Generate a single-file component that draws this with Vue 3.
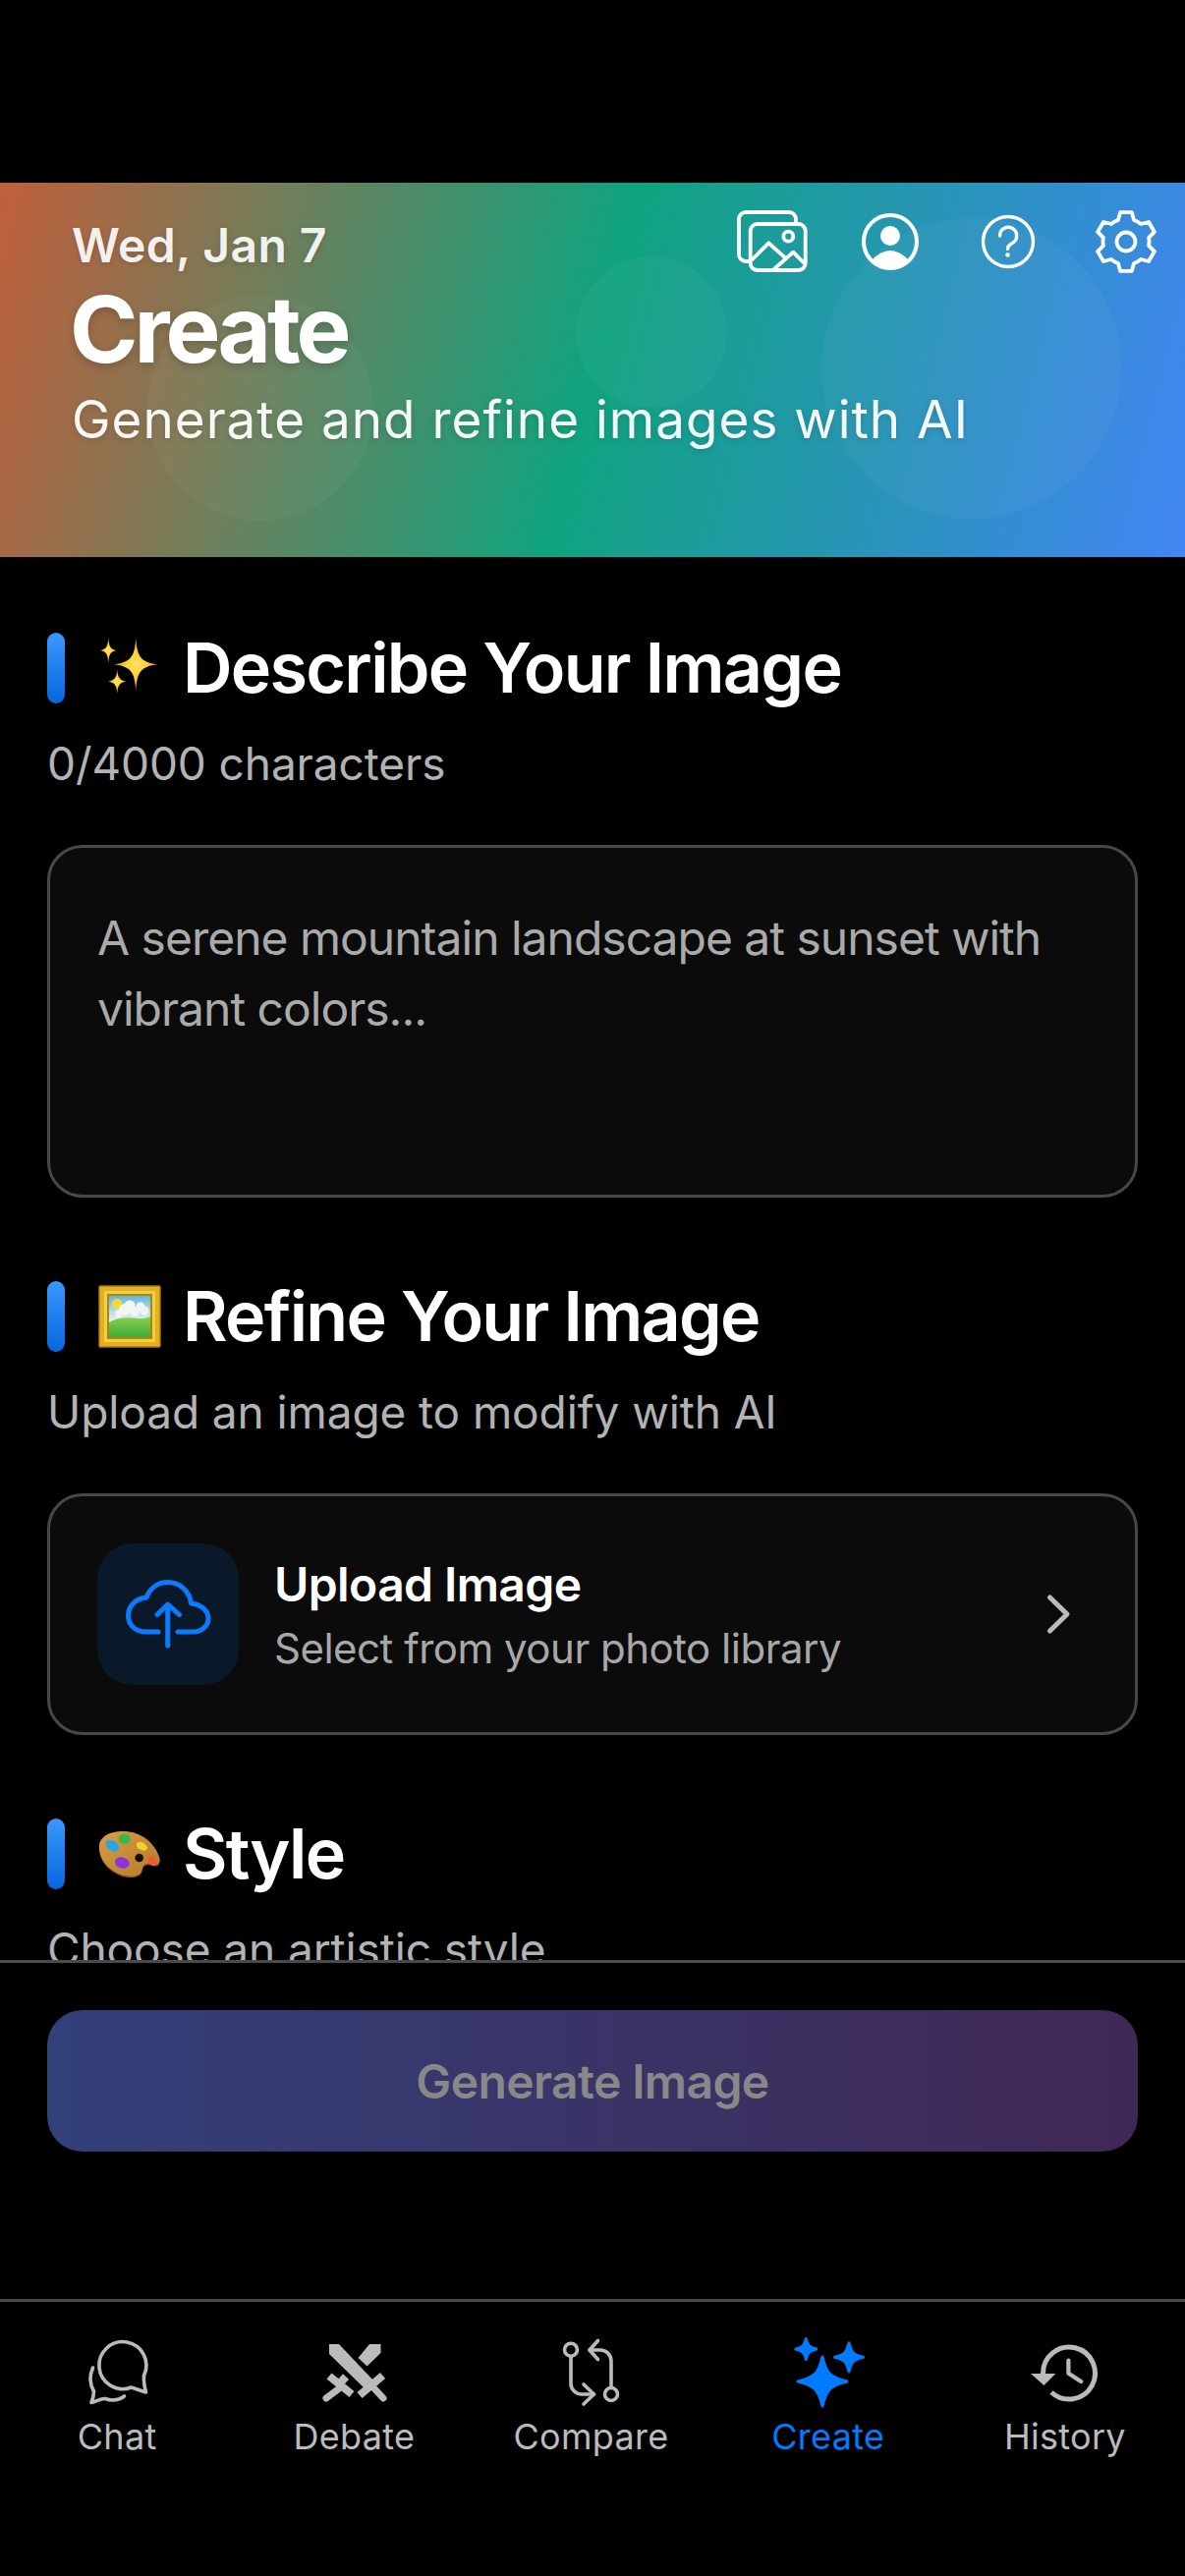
<script setup>
const star = (cx, cy, r) => {
  const k = r * 0.16
  return `M${cx} ${cy - r}C${cx + k} ${cy - k * 2} ${cx + k * 2} ${cy - k} ${cx + r} ${cy}C${cx + k * 2} ${cy + k} ${cx + k} ${cy + k * 2} ${cx} ${cy + r}C${cx - k} ${cy + k * 2} ${cx - k * 2} ${cy + k} ${cx - r} ${cy}C${cx - k * 2} ${cy - k} ${cx - k} ${cy - k * 2} ${cx} ${cy - r}Z`
}

const rad = (deg) => (deg * Math.PI) / 180
const pt = (r, deg) => `${(36 + r * Math.cos(rad(deg))).toFixed(2)} ${(36 + r * Math.sin(rad(deg))).toFixed(2)}`

// six-tooth gear outline
const gearPath = (() => {
  let d = ''
  for (let i = 0; i < 6; i++) {
    const a = -90 + i * 60
    d += `${i === 0 ? 'M' : 'A23 23 0 0 1 '}${pt(23.5, a - 20)}L${pt(30.5, a - 11)}L${pt(30.5, a + 11)}L${pt(23.5, a + 20)}`
  }
  return d + 'A23 23 0 0 1 ' + pt(23.5, -110) + 'Z'
})()

const tabs = [
  { key: 'chat', label: 'Chat' },
  { key: 'debate', label: 'Debate' },
  { key: 'compare', label: 'Compare' },
  { key: 'create', label: 'Create' },
  { key: 'history', label: 'History' }
]
</script>

<template>
  <div class="screen">
    <header class="hero">
      <span class="blob blob-a"></span>
      <span class="blob blob-b"></span>
      <span class="blob blob-c"></span>
      <div class="hero-date">Wed, Jan 7</div>
      <div class="hero-icons">
        <svg viewBox="0 0 72 72" class="hero-icon" fill="none" stroke="#fff" stroke-width="3.8" stroke-linecap="round" stroke-linejoin="round">
          <path d="M12 56H9a7 7 0 0 1-7-7V13a7 7 0 0 1 7-7h44a7 7 0 0 1 7 7v4" />
          <rect x="13.7" y="18" width="56" height="47" rx="7" />
          <path d="M15.7 54 32.3 37.3 48.3 51.7" />
          <path d="M38.3 63.5 57.3 46.7 68 57.5" />
          <circle cx="52.3" cy="30.7" r="5" />
        </svg>
        <svg viewBox="0 0 72 72" class="hero-icon" fill="none">
          <circle cx="36" cy="36" r="27" stroke="#fff" stroke-width="4" />
          <circle cx="36" cy="30" r="10" fill="#fff" />
          <path d="M17 55Q36 35 55 55A27 27 0 0 1 17 55Z" fill="#fff" />
        </svg>
        <svg viewBox="0 0 72 72" class="hero-icon" fill="none" stroke="#fff" stroke-width="3.4" stroke-linecap="round">
          <circle cx="36" cy="36" r="25.5" />
          <path d="M27.5 30a8.6 8.6 0 1 1 13 7.4c-3 1.8-5 3-5 6" />
          <circle cx="35.5" cy="49.5" r="1.6" fill="#fff" stroke-width="1.4" />
        </svg>
        <svg viewBox="0 0 72 72" class="hero-icon" fill="none" stroke="#fff" stroke-width="3.8" stroke-linejoin="round">
          <path :d="gearPath" />
          <circle cx="36" cy="36" r="9.5" />
        </svg>
      </div>
      <h1 class="hero-title">Create</h1>
      <p class="hero-sub">Generate and refine images with AI</p>
    </header>

    <main class="content">
      <section class="section">
        <div class="section-head">
          <span class="bar"></span>
          <svg viewBox="0 0 66 66" class="emoji">
            <defs>
              <radialGradient id="spark">
                <stop offset="0" stop-color="#ffe566" />
                <stop offset="0.55" stop-color="#fdc92e" />
                <stop offset="1" stop-color="#d98a1c" />
              </radialGradient>
            </defs>
            <path d="M39.3 2C40.5 20 43 27 61.5 29.3 43 31.5 40.5 38.5 39.3 56.5 38 38.5 35.5 31.5 17 29.3 35.5 27 38 20 39.3 2Z" fill="url(#spark)" />
            <path d="M11.3 2C12 11 13 14 20 15 13 16 12 19 11.3 28 10.6 19 9.6 16 2.6 15 9.6 14 10.6 11 11.3 2Z" fill="url(#spark)" />
            <path d="M20.3 34.5C21 42 22 45 29.5 46.7 22 48 21 51 20.3 59 19.6 51 18.6 48 11 46.7 18.6 45 19.6 42 20.3 34.5Z" fill="url(#spark)" />
          </svg>
          <h2 class="section-title">Describe Your Image</h2>
        </div>
        <p class="section-sub">0/4000 characters</p>
        <div class="prompt">A serene mountain landscape at sunset with vibrant colors...</div>
      </section>

      <section class="section">
        <div class="section-head">
          <span class="bar"></span>
          <svg viewBox="0 0 66 66" class="emoji">
            <defs>
              <linearGradient id="sky" x1="0" y1="0" x2="0" y2="1">
                <stop offset="0" stop-color="#5fb9d6" />
                <stop offset="0.6" stop-color="#e6f3ef" />
              </linearGradient>
              <linearGradient id="hill" x1="0" y1="0" x2="0" y2="1">
                <stop offset="0" stop-color="#8bd053" />
                <stop offset="1" stop-color="#3fae35" />
              </linearGradient>
            </defs>
            <rect x="2" y="2" width="62" height="62" rx="1" fill="#e3b023" />
            <rect x="2" y="2" width="62" height="62" rx="1" fill="none" stroke="#a97a12" stroke-width="1.4" />
            <rect x="7" y="7" width="52" height="52" fill="#f6cf3e" />
            <rect x="10" y="10" width="46" height="46" fill="#a8841f" />
            <rect x="12" y="12" width="42" height="42" fill="url(#sky)" />
            <circle cx="20" cy="20" r="5" fill="#fdd835" />
            <g fill="#f4f4f4">
              <circle cx="28" cy="26" r="6" />
              <circle cx="33" cy="22" r="5.500" />
              <circle cx="38" cy="28" r="5" />
              <circle cx="44" cy="23" r="4.500" />
              <circle cx="48" cy="27" r="4.500" />
              <circle cx="22" cy="30" r="4" />
            </g>
            <path d="M12 39C22 33 34 34 42 35 47 35.500 51 34 54 33V54H12Z" fill="url(#hill)" />
          </svg>
          <h2 class="section-title">Refine Your Image</h2>
        </div>
        <p class="section-sub">Upload an image to modify with AI</p>
        <div class="upload">
          <div class="upload-tile">
            <svg viewBox="0 0 144 144" class="upload-icon" fill="none" stroke="#0a7aff" stroke-width="5" stroke-linecap="round" stroke-linejoin="round">
              <path d="M62 90H50C38 90 31.5 82 31.5 73.5 31.5 64 39 56 50 55 54 45 62 39.5 71.5 39.5 84 39.5 94 48.5 95.5 61 105 62 113 68 113 76.5 113 84 106 90 97 90H82" />
              <path d="M71.7 104V62.5M61 72.5 71.7 62 83.5 72.5" />
            </svg>
          </div>
          <div class="upload-text">
            <div class="upload-title">Upload Image</div>
            <div class="upload-sub">Select from your photo library</div>
          </div>
          <svg viewBox="0 0 30 48" class="chevron" fill="none" stroke="#bbb" stroke-width="5" stroke-linecap="round" stroke-linejoin="round">
            <path d="M7.5 7 25 24 7.5 41" />
          </svg>
        </div>
      </section>

      <section class="section">
        <div class="section-head">
          <span class="bar"></span>
          <svg viewBox="0 0 66 66" class="emoji">
            <defs>
              <linearGradient id="wood" x1="0" y1="0" x2="1" y2="1">
                <stop offset="0" stop-color="#d99d45" />
                <stop offset="1" stop-color="#b57a2a" />
              </linearGradient>
            </defs>
            <path d="M2 27C2 15 15 10 28 10.5 44 11 58 22 63 37 65 44 61 46.5 57 45 52 43.5 47 44 46 49 45 54 43 56 37 57 22 58.5 2 46 2 27Z" fill="#8a5a1c" />
            <path d="M2 26C2 14 15 9.5 28 10 44 10.5 58 21 63 36 65 43 61 45 57 43.5 52 42 47 42.5 46 47.5 45 52.5 43 54.5 37 55.5 22 57 2 45 2 26Z" fill="url(#wood)" />
            <ellipse cx="15.3" cy="24.7" rx="7.5" ry="5" transform="rotate(35 15.3 24.7)" fill="#22a7e8" />
            <ellipse cx="27.7" cy="17.7" rx="6" ry="5" fill="#35b84a" />
            <ellipse cx="45.3" cy="25.3" rx="6" ry="3.8" transform="rotate(30 45.3 25.3)" fill="#f2d22e" />
            <ellipse cx="56" cy="40.3" rx="5.5" ry="4" transform="rotate(55 56 40.3)" fill="#ef5a3c" />
            <ellipse cx="25.3" cy="42" rx="7.5" ry="5.5" transform="rotate(15 25.3 42)" fill="#8a35d8" />
            <circle cx="42.7" cy="37" r="4.3" fill="#1a0e04" />
          </svg>
          <h2 class="section-title">Style</h2>
        </div>
        <p class="section-sub">Choose an artistic style</p>
      </section>
    </main>

    <div class="footer">
      <button class="generate" type="button">Generate Image</button>
    </div>

    <nav class="tabbar">
      <div v-for="tab in tabs" :key="tab.key" :class="['tab', { active: tab.key === 'create' }]">
        <svg v-if="tab.key === 'chat'" viewBox="0 0 72 72" class="tab-icon" fill="none" stroke="#bbb" stroke-width="3.6" stroke-linecap="round" stroke-linejoin="round">
          <path d="M61.5 38c-.5 5 .5 11 2 17-5-1.5-10-3.5-15-5A24 24 0 1 1 61.5 38Z" />
          <path d="M9.5 30C6 38 6.5 47 10.5 54 10.5 58 9.5 62 8 65.5 13 65 17 61 22 61.5 29 64 36 63 41.5 59" />
        </svg>
        <svg v-else-if="tab.key === 'debate'" viewBox="0 0 72 72" class="tab-icon" fill="#bbb" stroke="#bbb">
          <path d="M61.5 6H50L38.5 20 47.5 28.5 61.5 15Z" stroke="none" />
          <path d="M9 38.5 32 57" stroke-width="8" />
          <path d="M22 49 6 61" stroke-width="7" stroke-linecap="round" />
          <path d="M19 47 26 39" stroke-width="8" />
          <path d="M9 6H19L55 44 46 52 9 16Z" stroke="none" />
          <path d="M40 58 63.5 38" stroke-width="8" />
          <path d="M52 48 64 61" stroke-width="7" stroke-linecap="round" />
        </svg>
        <svg v-else-if="tab.key === 'compare'" viewBox="0 0 72 72" class="tab-icon" fill="none" stroke="#bbb" stroke-width="3.6" stroke-linecap="round" stroke-linejoin="round">
          <circle cx="14" cy="11.7" r="6.5" />
          <path d="M14 18.5V46a11 11 0 0 0 11 11H37.5" />
          <path d="M27 47 37.5 57 27 67" />
          <circle cx="55" cy="57" r="6.5" />
          <path d="M55 50V23a11 11 0 0 0-11-11H33" />
          <path d="M41.5 2.5 33 12 41.5 21.5" />
        </svg>
        <svg v-else-if="tab.key === 'create'" viewBox="0 0 72 72" class="tab-icon" fill="#007aff" stroke="#007aff" stroke-width="3" stroke-linejoin="round">
          <path :d="star(29, 44, 25)" />
          <path :d="star(12.3, 11, 10.5)" />
          <path :d="star(56, 19.3, 14.5)" />
        </svg>
        <svg v-else viewBox="0 0 72 72" class="tab-icon" fill="none" stroke="#bbb">
          <path d="M12.5 36A26.5 26.5 0 1 1 21 55" stroke-width="5" />
          <path d="M0 36H25.3L13.4 48Z" fill="#bbb" stroke="none" />
          <path d="M38.4 22.7V35.7L51.2 44" stroke-width="4.2" stroke-linecap="round" stroke-linejoin="round" />
        </svg>
        <span class="tab-label">{{ tab.label }}</span>
      </div>
    </nav>
  </div>
</template>

<style scoped>
.screen {
  width: 1206px;
  height: 2622px;
  background: #000;
  display: flex;
  flex-direction: column;
  padding-top: 186px;
  box-sizing: border-box;
  font-family: Inter, "Liberation Sans", sans-serif;
  overflow: hidden;
}

.hero {
  position: relative;
  flex: none;
  height: 381px;
  box-sizing: border-box;
  padding: 24px 24px 0 73px;
  display: grid;
  grid-template-columns: 1fr auto;
  grid-template-rows: 77px 96px auto;
  background: linear-gradient(104deg, #c15f3c 0%, #10a37f 50%, #4285f4 100%);
  overflow: hidden;
  color: #fff;
}

.blob {
  position: absolute;
  border-radius: 50%;
  background: rgba(255, 255, 255, 0.035);
}

.blob-a {
  left: 150px;
  top: 114px;
  width: 230px;
  height: 230px;
}

.blob-b {
  left: 586px;
  top: 75px;
  width: 154px;
  height: 154px;
}

.blob-c {
  left: 836px;
  top: 36px;
  width: 306px;
  height: 306px;
}

.hero-date {
  position: relative;
  padding-top: 9px;
  font-size: 48px;
  font-weight: 600;
  line-height: 62px;
  letter-spacing: 0.4px;
  color: rgba(255, 255, 255, 0.92);
  text-shadow: 0 2px 6px rgba(0, 0, 0, 0.15);
}

.hero-icons {
  position: relative;
  grid-column: 2;
  grid-row: 1 / span 2;
  display: flex;
  gap: 48px;
}

.hero-icon {
  width: 72px;
  height: 72px;
  overflow: visible;
}

.hero-title {
  position: relative;
  grid-column: 1;
  grid-row: 2;
  margin: 0 0 0 -2px;
  font-size: 94px;
  font-weight: 700;
  line-height: 96px;
  letter-spacing: -4px;
  text-shadow: 0 3px 10px rgba(0, 0, 0, 0.2);
}

.hero-sub {
  position: relative;
  grid-column: 1 / span 2;
  margin: 9px 0 0;
  font-size: 53px;
  font-weight: 400;
  line-height: 70px;
  letter-spacing: 1px;
  color: rgba(255, 255, 255, 0.95);
  text-shadow: 0 2px 6px rgba(0, 0, 0, 0.15);
}

.content {
  flex: 1;
  min-height: 0;
  overflow: hidden;
  padding: 77px 48px 0;
  display: flex;
  flex-direction: column;
  gap: 85px;
}

.section-head {
  display: flex;
  align-items: center;
  height: 72px;
}

.bar {
  flex: none;
  width: 18px;
  height: 72px;
  border-radius: 9px;
  background: linear-gradient(180deg, #3a98ff, #0766dc);
}

.emoji {
  flex: none;
  width: 66px;
  height: 66px;
  margin: 0 21px 0 33px;
  overflow: visible;
}

.section-title {
  margin: 0;
  font-size: 70px;
  font-weight: 600;
  line-height: 72px;
  letter-spacing: -1.7px;
  color: #fff;
  white-space: nowrap;
}

.section-sub {
  margin: 31px 0 53px;
  font-size: 46px;
  line-height: 60px;
  letter-spacing: -0.1px;
  color: #b3b3b3;
}

.prompt {
  box-sizing: border-box;
  height: 359px;
  padding: 56px 48px;
  border: 3px solid #484848;
  border-radius: 36px;
  background: #0b0b0b;
  font-size: 48px;
  line-height: 72px;
  letter-spacing: -1px;
  color: #aaa;
}

.upload {
  display: flex;
  align-items: center;
  gap: 36px;
  padding: 48px;
  border: 3px solid #484848;
  border-radius: 36px;
  background: #0b0b0b;
}

.upload-tile {
  flex: none;
  width: 144px;
  height: 144px;
  border-radius: 36px;
  background: #0a1929;
}

.upload-icon {
  display: block;
  width: 144px;
  height: 144px;
}

.upload-text {
  flex: 1;
  min-width: 0;
}

.upload-title {
  font-size: 48px;
  font-weight: 600;
  line-height: 62px;
  letter-spacing: -0.6px;
  color: #fff;
}

.upload-sub {
  margin-top: 7px;
  font-size: 42px;
  line-height: 54px;
  letter-spacing: -0.5px;
  color: #a8a8a8;
}

.chevron {
  flex: none;
  width: 30px;
  height: 48px;
  margin-right: 16px;
}

.footer {
  flex: none;
  height: 345px;
  box-sizing: border-box;
  border-top: 3px solid #4a4a4a;
  padding: 48px 48px 0;
  background: #000;
}

.generate {
  display: block;
  width: 100%;
  height: 144px;
  border: 0;
  border-radius: 36px;
  background: linear-gradient(90deg, #33407a, #402855);
  font-family: inherit;
  font-size: 48px;
  font-weight: 600;
  letter-spacing: -0.6px;
  color: #888;
}

.tabbar {
  flex: none;
  height: 282px;
  box-sizing: border-box;
  border-top: 3px solid #4a4a4a;
  padding-top: 37px;
  display: grid;
  grid-template-columns: repeat(5, 1fr);
  align-content: start;
}

.tab {
  display: flex;
  flex-direction: column;
  align-items: center;
  color: #bbb;
}

.tab.active {
  color: #007aff;
}

.tab-icon {
  width: 72px;
  height: 72px;
  overflow: visible;
}

.tab-label {
  margin: 6px 3px 0 0;
  font-size: 36px;
  line-height: 44px;
  letter-spacing: 0.3px;
}
</style>

<style>
html,
body {
  margin: 0;
  background: #000;
}
</style>
